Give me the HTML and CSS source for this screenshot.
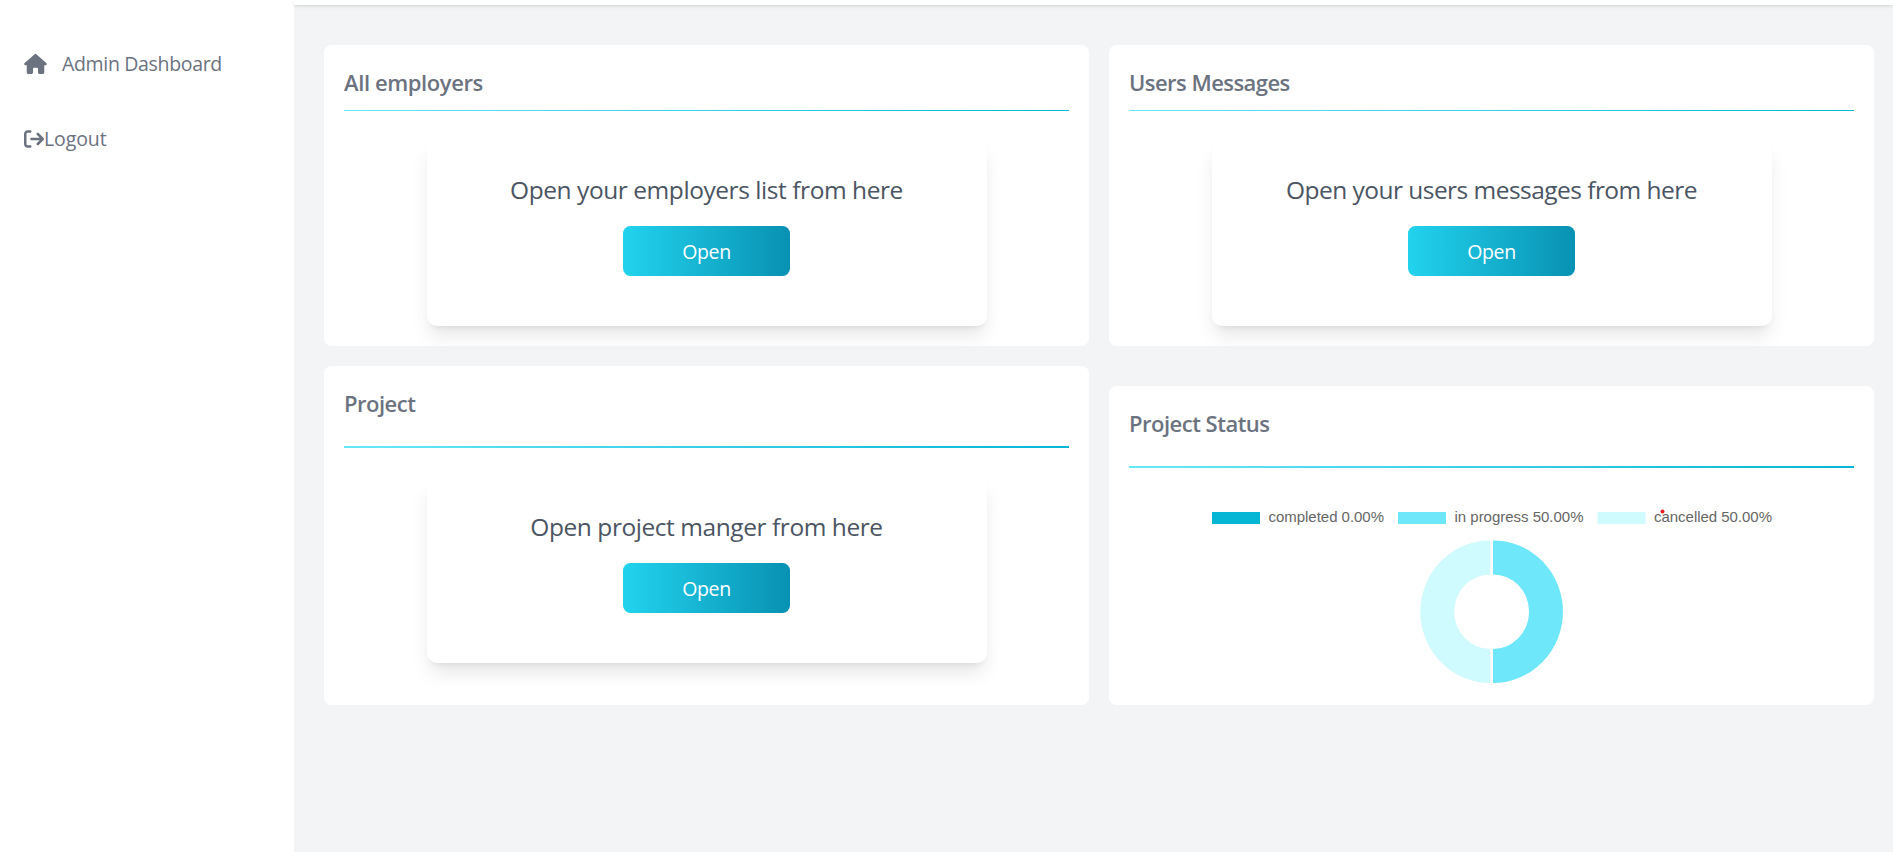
FILE: index.html
```html
<!DOCTYPE html>
<html lang="en">
<head>
<meta charset="utf-8">
<title>Admin Dashboard</title>
<link rel="stylesheet" href="styles.css">
</head>
<body>
<div class="layout">
  <aside class="sidebar">
    <a class="nav-item"><svg class="icon-home" viewBox="0 0 576 512"><path fill="currentColor" d="M575.8 255.5c0 18-15 32.100-32 32.100h-32l.7 160.200c0 2.700-.2 5.400-.5 8.100V472c0 22.100-17.900 40-40 40h-16c-1.100 0-2.200 0-3.300-.1-1.400.1-2.800.1-4.200.1H392c-22.100 0-40-17.900-40-40v-88c0-17.700-14.300-32-32-32h-64c-17.700 0-32 14.300-32 32v88c0 22.100-17.900 40-40 40h-55.900c-1.500 0-3-.1-4.500-.2-1.200.1-2.400.2-3.600.2h-16c-22.100 0-40-17.900-40-40V360c0-.9 0-1.900.1-2.800v-69.600H32c-18 0-32-14-32-32.100 0-9 3-17 10-24L266.400 8c7-7 15-8 22-8s15 2 21 7l255.400 224.500c8 7 12 15 11 24z"/></svg><span class="nav-home-text">Admin Dashboard</span></a>
    <a class="nav-item"><svg class="icon-logout" viewBox="0 0 512 512"><path fill="currentColor" d="M502.600 278.600c12.500-12.500 12.500-32.800 0-45.300l-128-128c-12.500-12.500-32.800-12.500-45.300 0s-12.500 32.800 0 45.300L402.700 224H192c-17.700 0-32 14.300-32 32s14.300 32 32 32h210.700l-73.400 73.400c-12.500 12.500-12.500 32.800 0 45.300s32.800 12.500 45.300 0l128-128zM160 96c17.700 0 32-14.300 32-32s-14.300-32-32-32H96C43 32 0 75 0 128v256c0 53 43 96 96 96h64c17.700 0 32-14.300 32-32s-14.300-32-32-32H96c-17.700 0-32-14.300-32-32V128c0-17.700 14.300-32 32-32h64z"/></svg><span class="nav-logout-text">Logout</span></a>
  </aside>
  <div class="content">
    <header class="topbar"></header>
    <main class="grid">
      <section class="card">
        <h2 class="title t-employers">All employers</h2>
        <div class="rule thin"></div>
        <div class="panel"><p class="lead">Open your employers list from here</p><button class="btn">Open</button></div>
      </section>
      <section class="card">
        <h2 class="title t-messages">Users Messages</h2>
        <div class="rule thin"></div>
        <div class="panel"><p class="lead l-messages">Open your users messages from here</p><button class="btn">Open</button></div>
      </section>
      <section class="card">
        <h2 class="title">Project</h2>
        <div class="rule"></div>
        <div class="panel"><p class="lead">Open project manger from here</p><button class="btn">Open</button></div>
      </section>
      <section class="card status">
        <h2 class="title">Project Status</h2>
        <div class="rule"></div>
        <svg class="chart" viewBox="0 0 565 187" width="565" height="187">
          <rect x="2" y="14" width="48" height="12" fill="#06b6d4"/>
          <text class="legend" x="58.500" y="24" textLength="115.500">completed 0.00%</text>
          <rect x="188" y="14" width="48" height="12" fill="#6ee7fa"/>
          <text class="legend" x="244.500" y="24" textLength="129">in progress 50.00%</text>
          <rect x="387.500" y="14" width="48" height="12" fill="#cffafe"/>
          <text class="legend" x="444" y="24" textLength="118">cancelled 50.00%</text>
          <path d="M283 42.400A70 71.300 0 0 1 283 185V151A36.100 37.300 0 0 0 283 76.400Z" fill="#6ee7fa"/>
          <path d="M280.300 42.400A70 71.300 0 0 0 280.300 185V151A36.100 37.300 0 0 1 280.300 76.400Z" fill="#cffafe"/>
          <circle cx="452.500" cy="13.500" r="2" fill="#e81b23"/>
        </svg>
      </section>
    </main>
  </div>
</div>
</body>
</html>
```
FILE: styles.css
```css
* { box-sizing: border-box; margin: 0; padding: 0; }
body { font-family: "Open Sans", "Noto Sans", sans-serif; background: #fff; color: #6b7280; overflow: hidden; }
.layout { display: grid; grid-template-columns: 294px 1fr; height: 852px; }
.sidebar { padding: 39px 24px; display: flex; flex-direction: column; gap: 25px; }
.nav-item { display: flex; align-items: center; height: 50px; font-size: 19.5px; line-height: 30px; white-space: nowrap; }
.nav-home-text { letter-spacing: -.33px; }
.nav-logout-text { letter-spacing: -.1px; }
.icon-home { width: 23px; height: 20px; margin-right: 15px; }
.icon-logout { width: 20px; height: 20px; }
.content { background: #f3f4f6; }
.topbar { height: 5px; background: #fff; box-shadow: 0 1.25px 3.75px rgba(0,0,0,.1), 0 1.25px 2.5px -1.25px rgba(0,0,0,.1); }
.grid { display: grid; grid-template-columns: 765px 765px; grid-template-rows: 301px 339px; gap: 20px; padding: 40px 0 0 30px; }
.card { background: #fff; border-radius: 7.5px; padding: 20px; display: flex; flex-direction: column; }
.status { margin-top: 20px; }
.title { font-size: 22px; font-weight: 600; line-height: 35px; letter-spacing: -.5px; white-space: nowrap; }
.t-employers { letter-spacing: -.4px; }
.t-messages { letter-spacing: -.54px; }
.rule { flex: none; height: 2px; margin: 25px 0 29px; background: linear-gradient(to right, #67e8f9, #06b6d4); }
.rule.thin { height: 1px; margin: 10px 0 29px; }
.panel { flex: none; width: 560px; height: 186px; margin: 0 auto; border-radius: 10px; background: #fff; box-shadow: 0 12.5px 18.75px -3.75px rgba(0,0,0,.1), 0 5px 7.5px -5px rgba(0,0,0,.1); display: flex; flex-direction: column; align-items: center; padding-top: 32px; }
.lead { font-size: 24.5px; line-height: 35px; letter-spacing: -.44px; color: #4b5563; white-space: nowrap; margin-bottom: 19px; }
.l-messages { letter-spacing: -.54px; }
.btn { width: 167px; height: 50px; padding-top: 1px; border: 0; border-radius: 7.5px; font: 19.5px/30px "Open Sans", sans-serif; letter-spacing: -.4px; color: #fff; background: linear-gradient(to right, #22d3ee, #0891b2); }
.chart { flex: none; display: block; margin: 1px 0 0 81px; }
.legend { font: 15px "Liberation Sans", Arial, sans-serif; fill: #666; }
```
